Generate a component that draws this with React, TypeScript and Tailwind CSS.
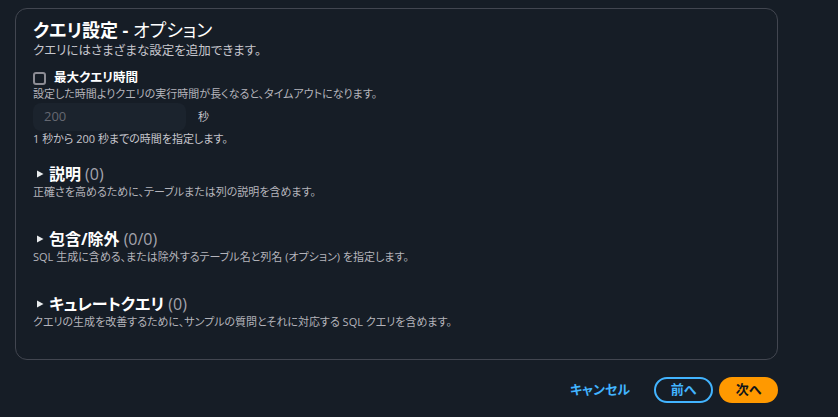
import React from "react";

const font = { fontFamily: '"Open Sans", "Noto Sans CJK JP", sans-serif' };

function Section({ title, count, desc }: { title: string; count: string; desc: string }) {
  return (
    <div>
      <div className="flex items-center h-[20px]">
        <svg width="8" height="10" viewBox="0 0 8 10" className="ml-[3px] mr-[5px]">
          <path d="M1 1.5 L7.5 5 L1 8.5 Z" fill="#e9ebed" />
        </svg>
        <span className="text-[16px] leading-[20px] font-bold text-white">{title}</span>
        <span className="ml-[4px] text-[16px] leading-[20px] text-[#a4a4ad]">{count}</span>
      </div>
      <p className="text-[11px] leading-[16px] text-[#b4b4bb]">{desc}</p>
    </div>
  );
}

export default function App() {
  return (
    <div
      className="min-h-screen w-[838px] h-[417px] overflow-hidden bg-[#161d26] pt-[8px] pl-[15px] [font-feature-settings:'palt']"
      style={font}
    >
      <div className="w-[763px] h-[352px] rounded-[12px] border border-[#424650] pl-[17px] pr-[16px] pt-[10px]">
        <h2 className="text-[18px] leading-[22px] font-bold text-white">
          クエリ設定 - <span className="font-normal">オプション</span>
        </h2>
        <p className="text-[12.5px] leading-[20px] text-[#c6c6cd]">クエリにはさまざまな設定を追加できます。</p>

        <div className="mt-[9px] flex items-center h-[16px]">
          <span className="w-[13px] h-[13px] rounded-[3px] border-2 border-[#8c8c94]" />
          <span className="ml-[8px] text-[12.5px] leading-[16px] font-bold text-white">最大クエリ時間</span>
        </div>
        <p className="text-[11px] leading-[16px] text-[#b4b4bb]">
          設定した時間よりクエリの実行時間が長くなると、タイムアウトになります。
        </p>
        <div className="mt-[1px] flex items-center">
          <div className="w-[153px] h-[28px] rounded-[8px] bg-[#1b232d] flex items-center pl-[11px] text-[13px] text-[#656871]">
            200
          </div>
          <span className="ml-[12px] text-[11px] text-[#c6c6cd]">秒</span>
        </div>
        <p className="text-[11px] leading-[16px] text-[#c6c6cd]">1 秒から 200 秒までの時間を指定します。</p>

        <div className="mt-[17px] flex flex-col gap-[29px]">
          <Section title="説明" count="(0)" desc="正確さを高めるために、テーブルまたは列の説明を含めます。" />
          <Section
            title="包含/除外"
            count="(0/0)"
            desc="SQL 生成に含める、または除外するテーブル名と列名 (オプション) を指定します。"
          />
          <Section
            title="キュレートクエリ"
            count="(0)"
            desc="クエリの生成を改善するために、サンプルの質問とそれに対応する SQL クエリを含めます。"
          />
        </div>
      </div>

      <div className="w-[763px] mt-[17px] flex items-center justify-end">
        <button className="text-[13px] font-bold text-[#42b4ff] mr-[24px]">キャンセル</button>
        <button className="w-[59px] h-[26px] rounded-full border-2 border-[#42b4ff] text-[13px] font-bold text-[#42b4ff] mr-[6px]">
          前へ
        </button>
        <button className="w-[59px] h-[26px] rounded-full bg-[#ff9900] text-[13px] font-bold text-[#0f141a]">次へ</button>
      </div>
    </div>
  );
}
